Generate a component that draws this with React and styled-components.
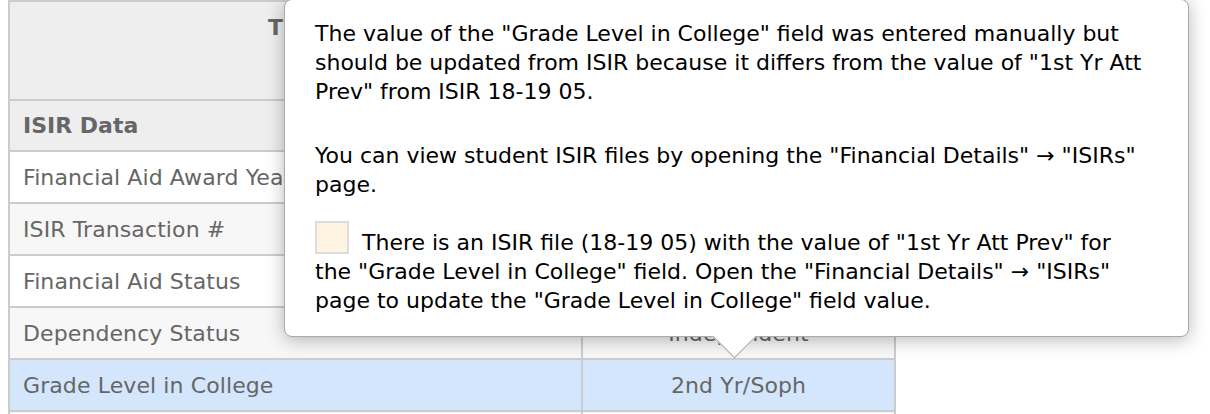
import { createGlobalStyle, styled } from "styled-components";

const GlobalStyle = createGlobalStyle`
  html, body {
    margin: 0;
    padding: 0;
    background: #fff;
  }
  body {
    font-family: "DejaVu Sans", Verdana, sans-serif;
  }
`;

const StylePage = styled.div`
  position: relative;
  padding: 0 8px;
  height: 414px;
  overflow: hidden;
`;

const StyleTable = styled.table`
  border-collapse: collapse;
  table-layout: fixed;
  width: 886px;
  font-size: 22px;
  color: #666;
`;

const StyleCol = styled.col`
  width: ${(props) => props.$w}px;
`;

const StyleTitle = styled.th`
  height: 99px;
  padding: 13px 13px 0 13px;
  box-sizing: border-box;
  vertical-align: top;
  text-align: center;
  font-weight: bold;
  background: #eee;
  border: 2px solid #ccc;
`;

const StyleSection = styled.th`
  height: 49px;
  padding: 0 13px;
  text-align: left;
  font-weight: bold;
  background: #eee;
  border: 2px solid #ccc;
`;

const StyleRow = styled.tr`
  background: ${(props) =>
    props.$selected ? "#d4e6fb" : props.$odd ? "#f7f7f7" : "#fff"};
`;

const StyleCell = styled.td`
  height: 50px;
  padding: 0 13px;
  border: 2px solid #ccc;
  text-align: ${(props) => (props.$center ? "center" : "left")};
  letter-spacing: 0.1px;
  white-space: nowrap;
  overflow: hidden;
`;

const StyleTooltip = styled.div`
  position: absolute;
  top: -1px;
  left: 284px;
  z-index: 2;
  width: 905px;
  box-sizing: border-box;
  padding: 19px 30px 21px 30px;
  background: #fff;
  border: 1px solid #aaa;
  border-radius: 8px;
  box-shadow: 0 3px 18px rgba(0, 0, 0, 0.28);
  color: #000;
  font-size: 22px;
  line-height: 29px;
`;

const StyleParagraph = styled.p`
  margin: 0 0 ${(props) => props.$gap || 0}px 0;
`;

const StyleSwatch = styled.span`
  display: inline-block;
  width: 30px;
  height: 29px;
  margin-right: 6px;
  vertical-align: -4px;
  background: #fdf5e2;
  border: 2px solid #ddd;
`;

const StyleArrow = styled.span`
  position: absolute;
  left: 434px;
  bottom: -16px;
  width: 30px;
  height: 30px;
  background: #fff;
  border-right: 1px solid #aaa;
  border-bottom: 1px solid #aaa;
  transform: rotate(45deg);
`;

const rows = [
  { label: "Financial Aid Award Year", value: "2018-2019" },
  { label: "ISIR Transaction #", value: "05" },
  { label: "Financial Aid Status", value: "Eligible" },
  { label: "Dependency Status", value: "Independent" },
  { label: "Grade Level in College", value: "2nd Yr/Soph", selected: true },
  { label: "Enrollment Status", value: "Full Time" },
];

const IsirTooltip = () => {
  return (
    <StyleTooltip>
      <StyleParagraph $gap={35}>
        The value of the "Grade Level in College" field was entered manually but
        should be updated from ISIR because it differs from the value of "1st Yr
        Att Prev" from ISIR 18-19 05.
      </StyleParagraph>
      <StyleParagraph $gap={22}>
        You can view student ISIR files by opening the "Financial Details" →
        "ISIRs" page.
      </StyleParagraph>
      <StyleParagraph>
        <StyleSwatch /> There is an ISIR file (18-19 05) with the value of "1st
        Yr Att Prev" for
        <br />
        the "Grade Level in College" field. Open the "Financial Details" →
        "ISIRs"
        <br />
        page to update the "Grade Level in College" field value.
      </StyleParagraph>
      <StyleArrow />
    </StyleTooltip>
  );
};

const App = () => {
  return (
    <StylePage>
      <GlobalStyle />
      <StyleTable>
        <colgroup>
          <StyleCol $w={573} />
          <StyleCol $w={313} />
        </colgroup>
        <thead>
          <tr>
            <StyleTitle colSpan={2}>Title IV Student Aid Summary</StyleTitle>
          </tr>
          <tr>
            <StyleSection colSpan={2}>ISIR Data</StyleSection>
          </tr>
        </thead>
        <tbody>
          {rows.map((row, i) => (
            <StyleRow key={row.label} $odd={i % 2 === 1} $selected={row.selected}>
              <StyleCell>{row.label}</StyleCell>
              <StyleCell $center>{row.value}</StyleCell>
            </StyleRow>
          ))}
        </tbody>
      </StyleTable>
      <IsirTooltip />
    </StylePage>
  );
};

export default App;
